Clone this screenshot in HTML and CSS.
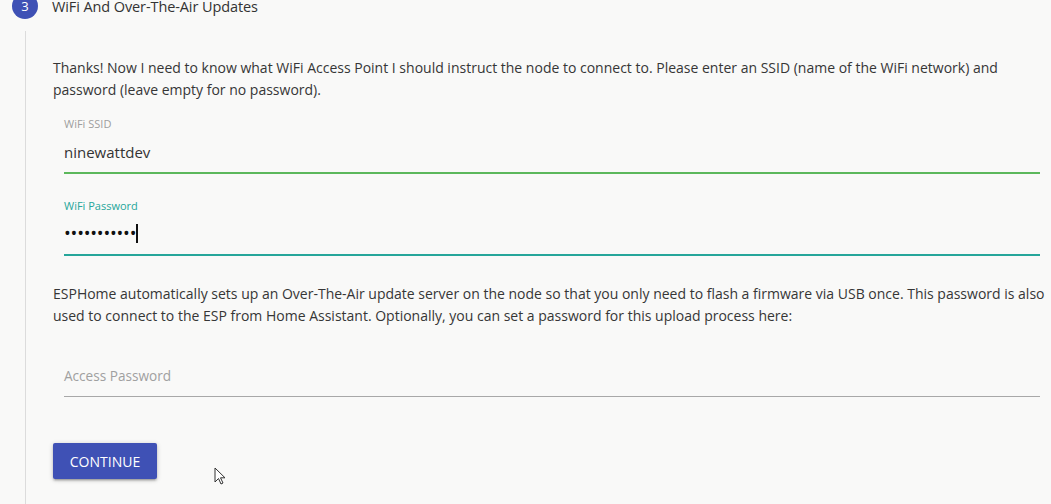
FILE: index.html
```html
<!DOCTYPE html>
<html>
<head>
<meta charset="utf-8">
<link rel="stylesheet" href="styles.css">
</head>
<body>
<div class="step">
  <div class="step-head">
    <span class="step-num">3</span>
    <span class="step-title">WiFi And Over-The-Air Updates</span>
  </div>
  <div class="step-body">
    <p class="text">Thanks! Now I need to know what WiFi Access Point I should instruct the node to connect to. Please enter an SSID (name of the WiFi network) and<br>password (leave empty for no password).</p>
    <div class="field field-ssid">
      <label class="label">WiFi SSID</label>
      <div class="value">ninewattdev</div>
    </div>
    <div class="field field-pass">
      <label class="label label-active">WiFi Password</label>
      <div class="value dots">•••••••••••<span class="caret"></span></div>
    </div>
    <p class="text text2">ESPHome automatically sets up an Over-The-Air update server on the node so that you only need to flash a firmware via USB once. This password is also<br>used to connect to the ESP from Home Assistant. Optionally, you can set a password for this upload process here:</p>
    <div class="field field-access">
      <div class="placeholder">Access Password</div>
    </div>
    <div class="actions">
      <button class="btn">CONTINUE</button>
      <svg class="pointer" width="12" height="19" viewBox="0 0 12 19"><path d="M1 1 L1 15 L4.5 11.5 L7 17 L9 16 L6.5 10.8 L11 10.8 Z" fill="#fff" stroke="#333" stroke-width="1" stroke-linejoin="round"/></svg>
    </div>
  </div>
</div>
</body>
</html>
```
FILE: styles.css
```css
html, body {
  margin: 0;
  padding: 0;
  background: #f9f9f8;
  font-family: "Open Sans", "Noto Sans", sans-serif;
  color: #333;
  overflow: hidden;
}
.step {
  position: relative;
  height: 504px;
}
.step-head {
  display: flex;
  align-items: center;
  height: 13px;
  padding-left: 12px;
}
.step-num {
  width: 26px;
  height: 26px;
  border-radius: 50%;
  background: #3f51b5;
  color: #fff;
  font-size: 13px;
  display: flex;
  align-items: center;
  justify-content: center;
  flex: none;
  margin-top: -1px;
}
.step-title {
  margin-left: 14px;
  font-size: 14.5px;
  font-weight: 500;
  color: #333;
  letter-spacing: -0.1px;
}
.step-body {
  margin-left: 25px;
  margin-top: 18px;
  border-left: 1px solid #dcdcdc;
  padding-left: 27px;
  padding-right: 11px;
  height: 480px;
}
.text {
  margin: 0;
  padding-top: 26px;
  font-size: 14px;
  line-height: 22px;
  color: #363636;
  white-space: nowrap;
}
.field {
  margin-left: 11px;
  position: relative;
}
.field-ssid {
  margin-top: 9px;
  border-bottom: 2px solid #5cb85c;
  height: 62px;
}
.field-pass {
  margin-top: 18px;
  border-bottom: 2px solid #26a69a;
  height: 62px;
}
.label {
  display: block;
  font-size: 11px;
  color: #9e9e9e;
  padding-top: 8px;
  line-height: 12px;
}
.label-active {
  color: #26a69a;
}
.value {
  margin-top: 12px;
  font-size: 15px;
  line-height: 20px;
  color: #333;
}
.dots {
  margin-top: 11px;
  font-size: 18px;
  letter-spacing: -0.2px;
  display: flex;
  align-items: center;
  color: #111;
}
.caret {
  display: inline-block;
  width: 1.5px;
  height: 19px;
  background: #111;
  margin-left: 0;
}
.text2 {
  padding-top: 27px;
}
.field-access {
  margin-top: 37px;
  border-bottom: 1px solid #a8a8a8;
  height: 32px;
}
.placeholder {
  padding-top: 2px;
  font-size: 13.6px;
  line-height: 20px;
  color: #a0a0a0;
}
.actions {
  display: flex;
  align-items: flex-start;
  margin-top: 46px;
  position: relative;
}
.btn {
  background: #3f51b5;
  color: #fff;
  border: none;
  border-radius: 2px;
  height: 36px;
  width: 104px;
  padding: 0;
  font-family: "Open Sans", "Noto Sans", sans-serif;
  font-size: 14px;
  letter-spacing: 0;
  box-shadow: 0 2px 2px 0 rgba(0,0,0,0.14), 0 3px 1px -2px rgba(0,0,0,0.12), 0 1px 5px 0 rgba(0,0,0,0.2);
}
.pointer {
  position: absolute;
  left: 161px;
  top: 24px;
}
```
